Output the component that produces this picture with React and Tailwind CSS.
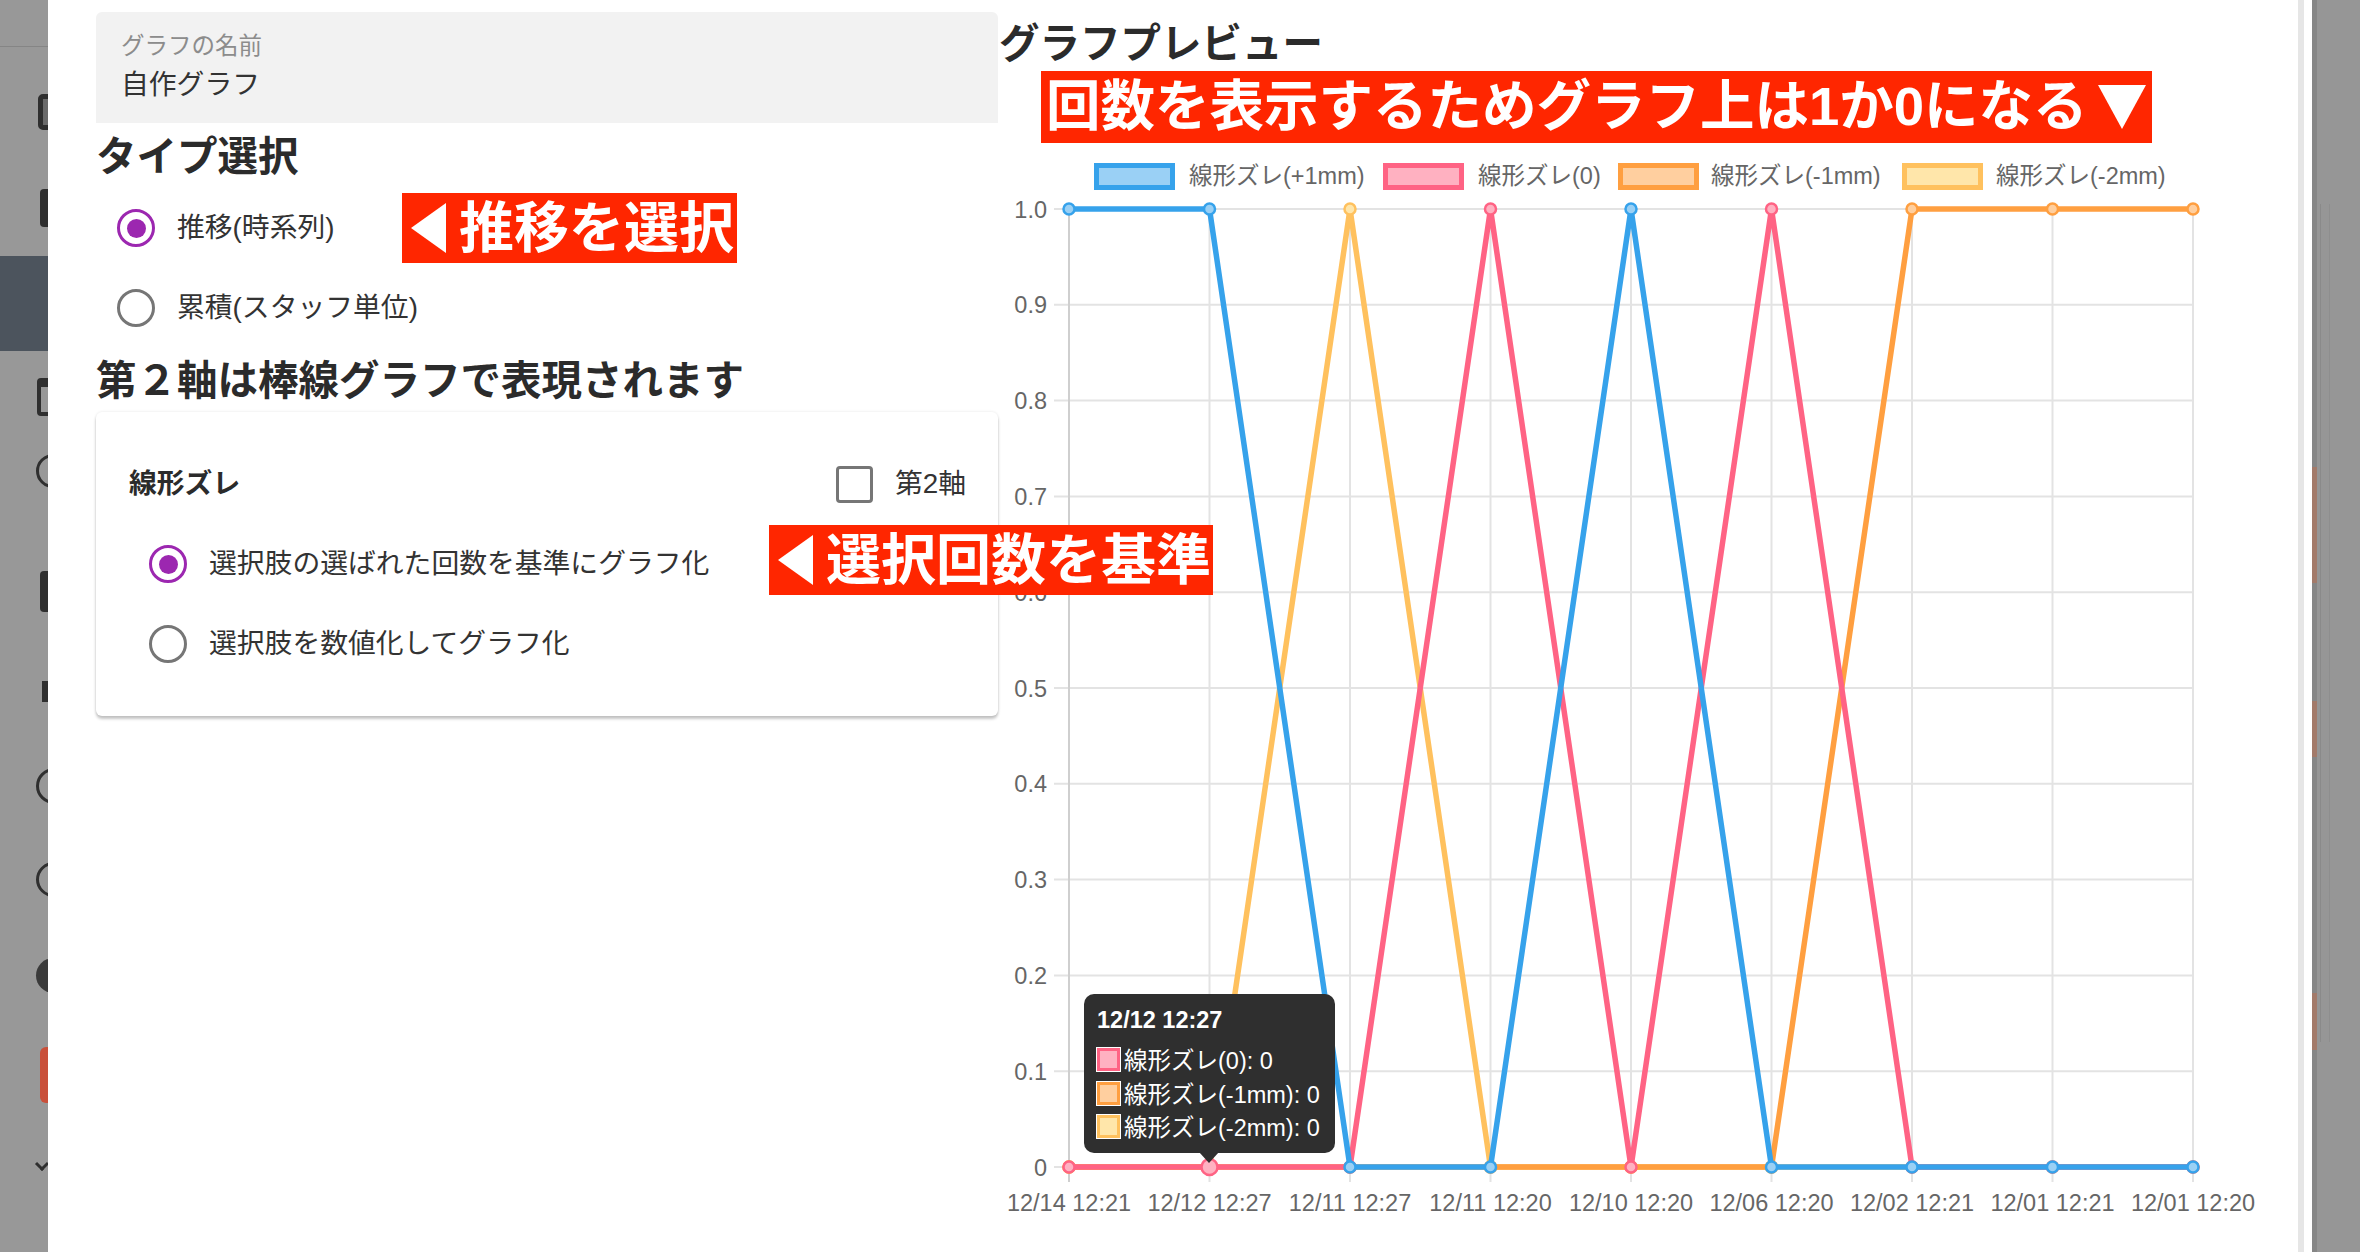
import React from "react";

const X = [1069, 1209.5, 1350, 1490.5, 1631, 1771.5, 1912, 2052.5, 2193];
const Y0 = 1167;
const STEP = 95.8;
const yv = (v) => Y0 - v * STEP * 10;

const SERIES = [
  { name: "線形ズレ(+1mm)", color: "#36a2eb", fill: "#9ad0f5", data: [1, 1, 0, 0, 1, 0, 0, 0, 0] },
  { name: "線形ズレ(0)", color: "#ff6384", fill: "#ffb1c1", data: [0, 0, 0, 1, 0, 1, 0, 0, 0] },
  { name: "線形ズレ(-1mm)", color: "#ff9f40", fill: "#ffcf9f", data: [0, 0, 0, 0, 0, 0, 1, 1, 1] },
  { name: "線形ズレ(-2mm)", color: "#ffc15e", fill: "#ffe6aa", data: [0, 0, 1, 0, 0, 0, 0, 0, 0] },
];

const LEGEND_BOX = [1094, 1383, 1618, 1902];
const LEGEND_TEXT = [1189, 1478, 1711, 1996];

const XLABELS = [
  "12/14 12:21",
  "12/12 12:27",
  "12/11 12:27",
  "12/11 12:20",
  "12/10 12:20",
  "12/06 12:20",
  "12/02 12:21",
  "12/01 12:21",
  "12/01 12:20",
];

const YLABELS = ["0", "0.1", "0.2", "0.3", "0.4", "0.5", "0.6", "0.7", "0.8", "0.9", "1.0"];

function Radio({ checked }) {
  return checked ? (
    <span className="flex h-[38px] w-[38px] shrink-0 items-center justify-center rounded-full border-[3.5px] border-[#9c27b0]">
      <span className="h-[19px] w-[19px] rounded-full bg-[#9c27b0]" />
    </span>
  ) : (
    <span className="flex h-[38px] w-[38px] shrink-0 rounded-full border-[3.5px] border-[#767676]" />
  );
}

function LeftTri() {
  return (
    <svg width="35" height="50" viewBox="0 0 35 50" className="shrink-0">
      <polygon points="35,0 35,50 0,25" fill="#ffffff" />
    </svg>
  );
}

function Chart() {
  const order = [...SERIES].reverse();
  return (
    <svg
      width="1299"
      height="1102"
      viewBox="999 150 1299 1102"
      className="mt-[7px] block shrink-0 font-['Liberation_Sans','Noto_Sans_CJK_JP',sans-serif]"
    >
      {/* legend */}
      {SERIES.map((s, i) => (
        <g key={s.name}>
          <rect x={LEGEND_BOX[i] + 2.5} y={165.5} width={76} height={22} fill={s.fill} stroke={s.color} strokeWidth="5" />
          <text x={LEGEND_TEXT[i]} y={184} fontSize="23.5" fill="#666666">
            {s.name}
          </text>
        </g>
      ))}

      {/* horizontal grid */}
      {YLABELS.map((l, k) => {
        const y = Y0 - k * STEP;
        return (
          <g key={l}>
            <line x1={1054} x2={2193} y1={y} y2={y} stroke="#e3e3e3" strokeWidth="2" />
            <text x={1047} y={y + 8.5} fontSize="23.5" fill="#666666" textAnchor="end">
              {l}
            </text>
          </g>
        );
      })}

      {/* vertical grid */}
      {X.map((x, i) => (
        <g key={i}>
          <line x1={x} x2={x} y1={yv(1)} y2={1182} stroke={i === 0 ? "#cfcfcf" : "#e3e3e3"} strokeWidth="2" />
          <text x={x} y={1211} fontSize="23.5" fill="#666666" textAnchor="middle">
            {XLABELS[i]}
          </text>
        </g>
      ))}

      {/* datasets */}
      {order.map((s) => (
        <g key={s.name}>
          <polyline
            points={s.data.map((v, i) => `${X[i]},${yv(v)}`).join(" ")}
            fill="none"
            stroke={s.color}
            strokeWidth="5.5"
            strokeLinejoin="miter"
          />
          {s.data.map((v, i) => (
            <circle key={i} cx={X[i]} cy={yv(v)} r="5.5" fill={s.fill} stroke={s.color} strokeWidth="2.5" />
          ))}
        </g>
      ))}

      {/* hovered point */}
      <circle cx={X[1]} cy={Y0} r="8" fill="#ffb1c1" stroke="#ff6384" strokeWidth="2.5" />

      {/* tooltip */}
      <rect x={1084} y={994} width={251} height={159} rx="10" fill="#2f2f2f" />
      <polygon points="1199,1152 1219,1152 1209,1163" fill="#2f2f2f" />
      <text x={1097} y={1028} fontSize="23.5" fontWeight="700" fill="#ffffff">
        12/12 12:27
      </text>
      {[
        { t: "線形ズレ(0): 0", c: "#ff6384", f: "#ffb1c1", y: 1047 },
        { t: "線形ズレ(-1mm): 0", c: "#ff9f40", f: "#ffcf9f", y: 1081 },
        { t: "線形ズレ(-2mm): 0", c: "#ffc15e", f: "#ffe6aa", y: 1114 },
      ].map((it) => (
        <g key={it.t}>
          <rect x={1096} y={it.y} width={25} height={25} fill="#ffffff" />
          <rect x={1097} y={it.y + 1} width={23} height={23} fill={it.c} />
          <rect x={1100} y={it.y + 4} width={17} height={17} fill={it.f} />
          <text x={1124} y={it.y + 22} fontSize="23.5" fill="#ffffff">
            {it.t}
          </text>
        </g>
      ))}
    </svg>
  );
}

function Sidebar() {
  return (
    <div className="flex w-[48px] shrink-0 flex-col overflow-hidden bg-[#989898]">
      <div className="h-[47px] shrink-0 border-b border-[#858585]" />
      <div className="ml-[38px] mt-[47px] h-[36px] w-[30px] shrink-0 rounded-[5px] border-[5px] border-[#2f2f2f] bg-[#6a6a6a]" />
      <div className="ml-[40px] mt-[59px] h-[38px] w-[28px] shrink-0 rounded-[4px] bg-[#2f2f2f]" />
      <div className="mt-[29px] h-[95px] w-[48px] shrink-0 bg-[#4c545d]" />
      <div className="ml-[37px] mt-[27px] h-[38px] w-[32px] shrink-0 rounded-[4px] border-[4px] border-t-[9px] border-[#2f2f2f]" />
      <div className="ml-[36px] mt-[38px] h-[34px] w-[34px] shrink-0 rounded-full border-[3px] border-[#2f2f2f]" />
      <div className="ml-[40px] mt-[83px] h-[41px] w-[28px] shrink-0 rounded-[4px] bg-[#2f2f2f]" />
      <div className="ml-[42px] mt-[69px] h-[21px] w-[20px] shrink-0 bg-[#2f2f2f]" />
      <div className="ml-[36px] mt-[66px] h-[36px] w-[36px] shrink-0 rounded-full border-[3px] border-[#2f2f2f]" />
      <div className="ml-[36px] mt-[58px] h-[35px] w-[35px] shrink-0 rounded-full border-[3px] border-[#2f2f2f]" />
      <div className="ml-[36px] mt-[61px] h-[35px] w-[35px] shrink-0 rounded-full bg-[#3a3a3a]" />
      <div className="ml-[40px] mt-[54px] h-[56px] w-[30px] shrink-0 rounded-[6px] bg-[#c9503a]" />
      <div className="ml-[37px] mt-[56px] h-[10px] w-[10px] shrink-0 rotate-45 border-b-[3px] border-r-[3px] border-[#2f2f2f]" />
    </div>
  );
}

function RightStrip() {
  return (
    <div className="flex w-[48px] shrink-0 bg-[#969696]">
      <div className="flex w-[5px] shrink-0 flex-col bg-[#868686]">
        <div className="h-[467px] shrink-0" />
        <div className="h-[116px] shrink-0 bg-[#a27a6a]" />
        <div className="h-[118px] shrink-0" />
        <div className="h-[56px] shrink-0 bg-[#a27a6a]" />
        <div className="h-[236px] shrink-0" />
        <div className="h-[57px] shrink-0 bg-[#a27a6a]" />
      </div>
      <div className="mt-[204px] h-[838px] w-[4px] shrink-0 border-r border-[#8a8a8a]" />
      <div className="ml-[8px] mt-[204px] h-[838px] w-[1px] shrink-0 bg-[#8e8e8e]" />
    </div>
  );
}

export default function App() {
  return (
    <div className="flex h-[1252px] w-[2360px] overflow-hidden bg-[#989898] font-['Liberation_Sans','Noto_Sans_CJK_JP',sans-serif]">
      <Sidebar />
      <div className="flex w-[2264px] shrink-0 bg-white">
        {/* left column */}
        <div className="ml-[48px] flex w-[902px] shrink-0 flex-col pt-[12px]">
          <div className="flex h-[111px] shrink-0 flex-col rounded-t-[6px] bg-[#f2f2f2] px-[25px] pt-[23px]">
            <div className="text-[23.5px] leading-none text-[#8c8c8c]">グラフの名前</div>
            <div className="mt-[12px] text-[27.8px] leading-none text-[#333333]">自作グラフ</div>
          </div>
          <h2 className="mt-[14px] h-[40px] text-[40.5px] font-bold leading-none text-[#2b2b2b]">タイプ選択</h2>
          <div className="relative mt-[31px] flex h-[40px] items-center">
            <span className="ml-[21px]">
              <Radio checked />
            </span>
            <span className="ml-[22px] text-[27.8px] leading-none text-[#333333]">推移(時系列)</span>
            <div className="absolute left-[306px] top-[-15px] flex h-[70px] w-[335px] items-center bg-[#ff2600] pl-[9px]">
              <LeftTri />
              <span className="ml-[13px] whitespace-nowrap text-[55px] font-bold leading-none text-white">推移を選択</span>
            </div>
          </div>
          <div className="mt-[40px] flex h-[40px] items-center">
            <span className="ml-[21px]">
              <Radio />
            </span>
            <span className="ml-[22px] text-[27.8px] leading-none text-[#333333]">累積(スタッフ単位)</span>
          </div>
          <h2 className="mt-[33px] h-[40px] text-[40.5px] font-bold leading-none text-[#2b2b2b]">第２軸は棒線グラフで表現されます</h2>
          <div className="relative mt-[11px] flex h-[304px] shrink-0 flex-col rounded-[6px] bg-white pl-[33px] pr-[32px] pt-[52px] shadow-[0_3px_3px_rgba(0,0,0,0.22),0_0_3px_rgba(0,0,0,0.1)]">
            <div className="flex h-[40px] items-center justify-between">
              <span className="text-[27.8px] font-bold leading-none text-[#2b2b2b]">線形ズレ</span>
              <div className="flex items-center">
                <span className="h-[37px] w-[37px] rounded-[4px] border-[3.5px] border-[#767676]" />
                <span className="ml-[22px] text-[27.8px] leading-none text-[#333333]">第2軸</span>
              </div>
            </div>
            <div className="mt-[40px] flex h-[40px] items-center">
              <span className="ml-[20px]">
                <Radio checked />
              </span>
              <span className="ml-[22px] text-[27.8px] leading-none text-[#333333]">選択肢の選ばれた回数を基準にグラフ化</span>
            </div>
            <div className="mt-[40px] flex h-[40px] items-center">
              <span className="ml-[20px]">
                <Radio />
              </span>
              <span className="ml-[22px] text-[27.8px] leading-none text-[#333333]">選択肢を数値化してグラフ化</span>
            </div>
            <div className="absolute left-[673px] top-[113px] flex h-[70px] w-[444px] items-center bg-[#ff2600] pl-[9px]">
              <LeftTri />
              <span className="ml-[13px] whitespace-nowrap text-[55px] font-bold leading-none text-white">選択回数を基準</span>
            </div>
          </div>
        </div>

        {/* right column */}
        <div className="ml-[1px] flex w-[1299px] shrink-0 flex-col pt-[24px]">
          <h2 className="h-[40px] text-[40.5px] font-bold leading-none text-[#2b2b2b]">グラフプレビュー</h2>
          <div className="ml-[42px] mt-[7px] flex h-[72px] w-[1111px] shrink-0 items-center bg-[#ff2600] pl-[5px]">
            <span className="whitespace-nowrap text-[54.5px] font-bold leading-none text-white">回数を表示するためグラフ上は1か0になる</span>
            <svg width="48" height="44" viewBox="0 0 48 44" className="ml-auto mr-[6px] shrink-0">
              <polygon points="0,0 48,0 24,44" fill="#ffffff" />
            </svg>
          </div>
          <Chart />
        </div>

        <div className="w-[6px] shrink-0 bg-[#e6e6e6]" />
        <div className="w-[8px] shrink-0" />
      </div>
      <RightStrip />
    </div>
  );
}
